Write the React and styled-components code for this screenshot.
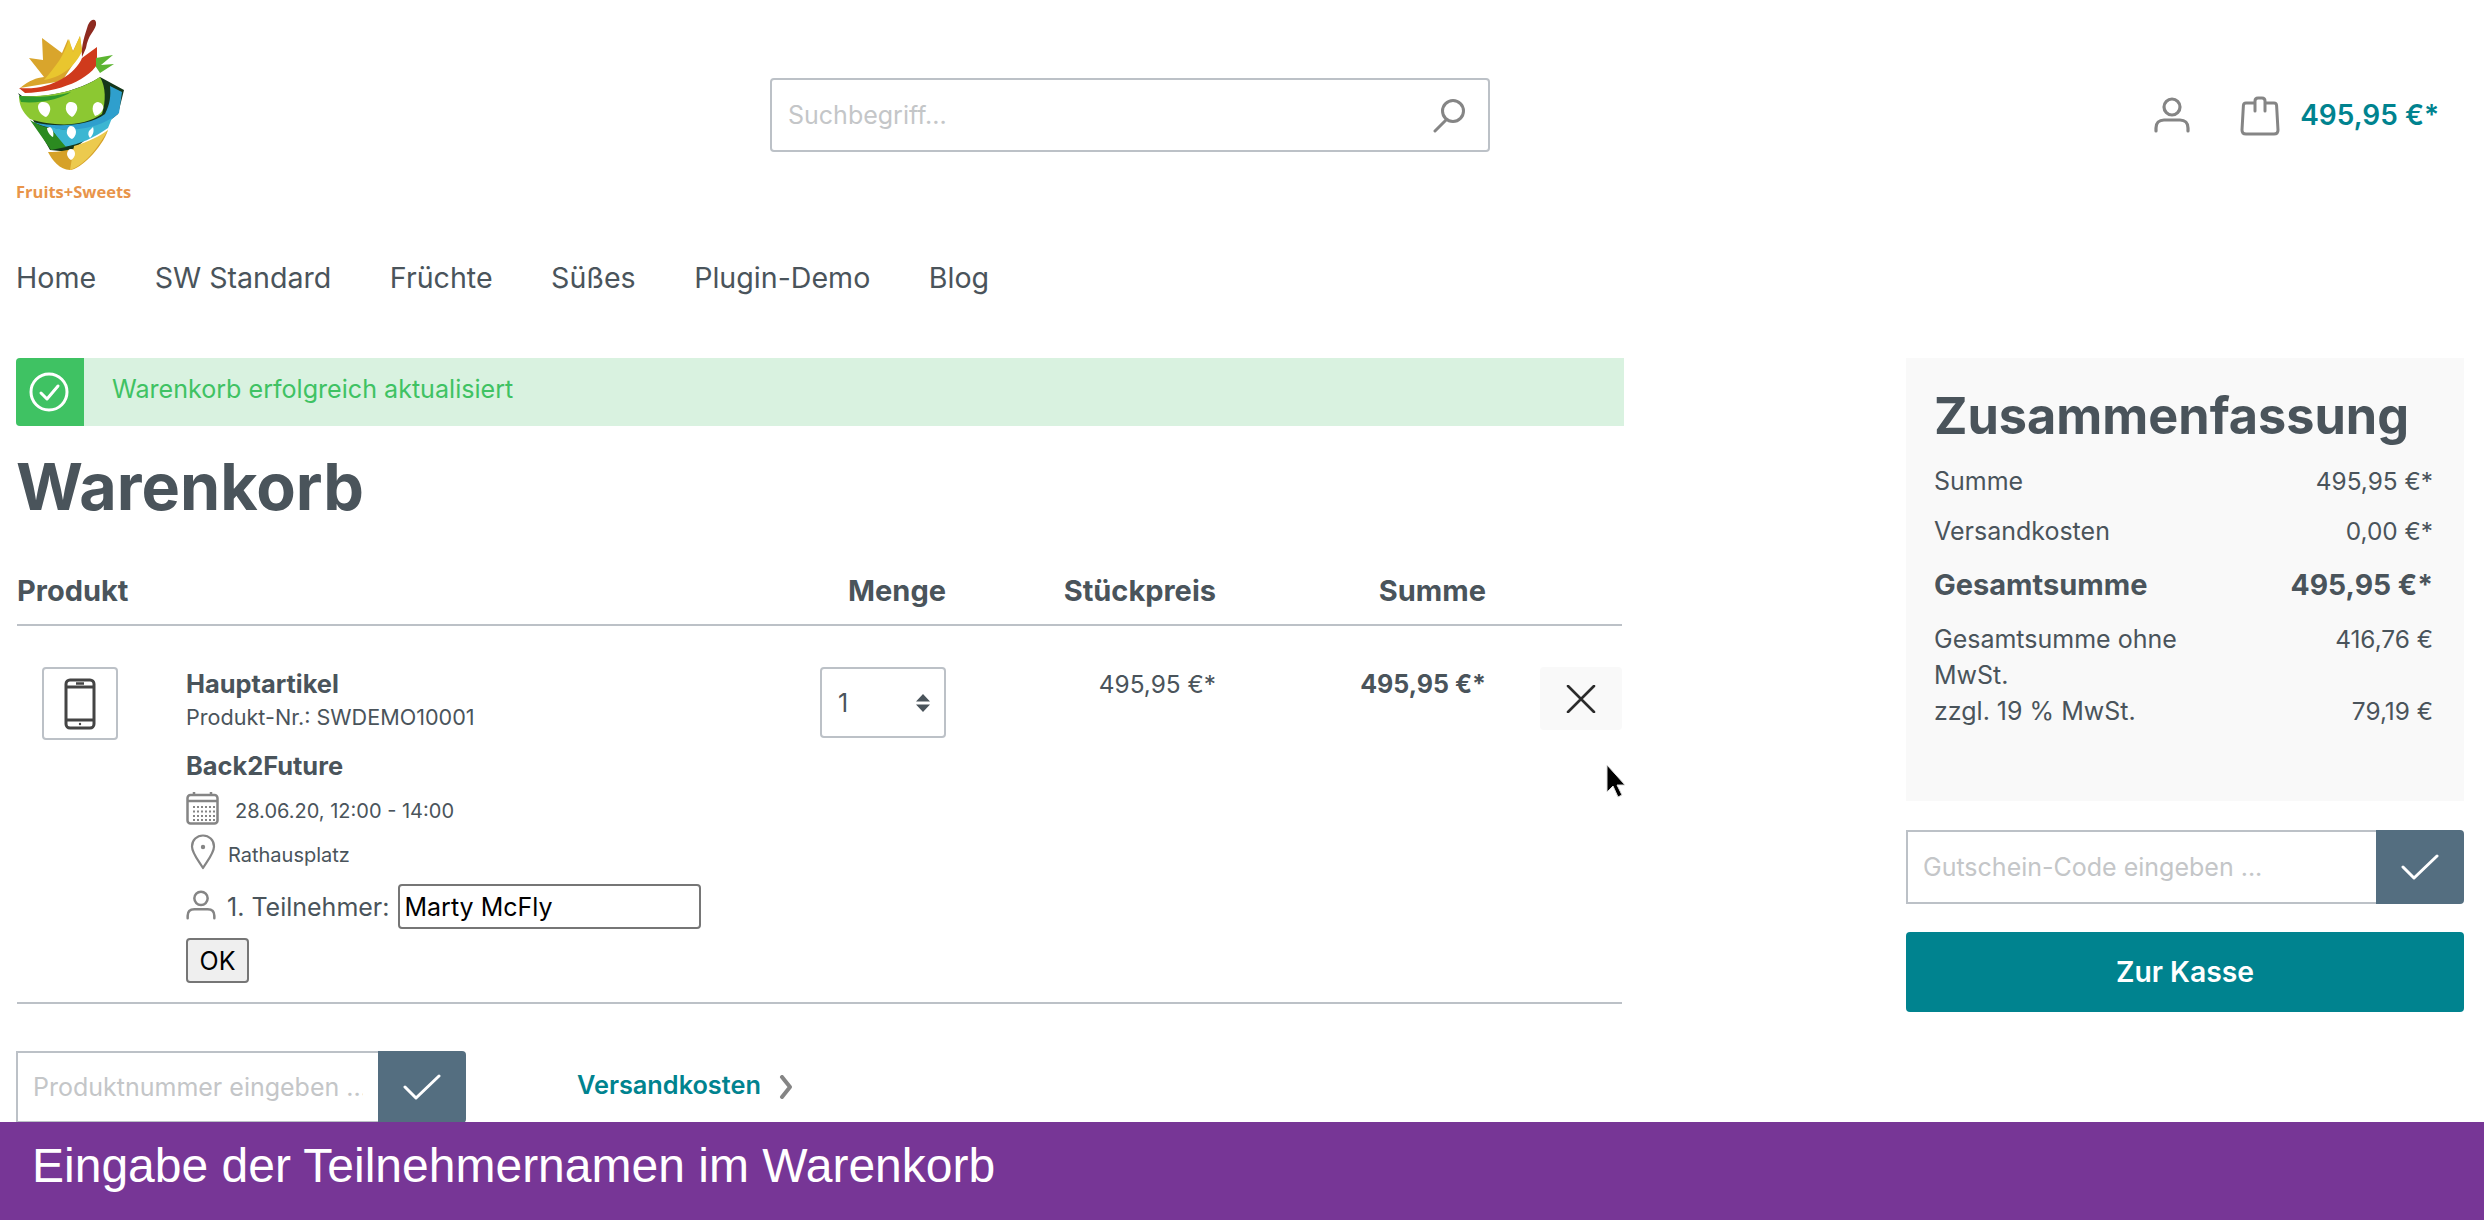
import React from "react";
import styled, { createGlobalStyle } from "styled-components";

const Global = createGlobalStyle`
  html, body { margin: 0; padding: 0; background: #fff; }
  body { font-family: Inter, "Liberation Sans", sans-serif; color: #4a545b; }
  * { box-sizing: border-box; }
  input::placeholder { color: #c4c6c8; opacity: 1; }
`;

const Page = styled.div`
  position: relative; width: 2484px; height: 1220px; overflow: hidden;
  display: flex; flex-direction: column;
`;
const Main = styled.main`
  flex: 1; min-height: 0; overflow: hidden; padding: 0 19px 0 16px;
`;
const Header = styled.header`
  height: 230px; display: flex; align-items: center;
`;
const Logo = styled.div`
  width: 754px; align-self: flex-start; padding-top: 17px; display: flex; flex-direction: column;
`;
const LogoText = styled.span`
  font: 700 16.5px/18px "Open Sans", sans-serif; color: #e8944a; margin-top: 1px;
`;
const Search = styled.div`
  width: 720px; height: 74px; border: 2px solid #bcc1c7; border-radius: 4px;
  display: flex; align-items: center; justify-content: space-between; padding: 0 20px 0 16px;
`;
const SearchInput = styled.input`
  border: 0; outline: 0; flex: 1; font: 400 25px Inter, sans-serif; background: transparent; padding: 0;
`;
const Actions = styled.div`
  flex: 1; display: flex; align-items: center; justify-content: flex-end; padding-right: 26px;
`;
const CartPrice = styled.span`
  font: 600 28px Inter, sans-serif; color: #00838f; margin-left: 20px;
`;
const BagSlot = styled.span`
  margin-left: 50px; display: flex; margin-top: 2px;
`;
const Nav = styled.nav`
  display: flex; gap: 58.5px; padding-top: 30px; margin-bottom: 62px;
`;
const NavItem = styled.a`
  font: 400 28.6px/36px Inter, sans-serif; color: #4a545b;
`;
const Columns = styled.div`
  display: grid; grid-template-columns: 1608px 558px; column-gap: 282px; align-items: start;
`;
const Alert = styled.div`
  height: 68px; background: #d9f2e0; border-radius: 4px 0 0 4px; display: flex; align-items: center;
  overflow: hidden; margin-bottom: 22px;
`;
const AlertIcon = styled.div`
  width: 68px; height: 100%; background: #3fc263; display: flex; align-items: center; justify-content: center;
  padding-right: 2px;
`;
const AlertText = styled.span`
  margin-left: 28px; font: 400 25.1px/30px Inter, sans-serif; color: #3fc263; margin-top: -6px;
`;
const Title = styled.h1`
  margin: 0; font: 700 64.6px/78px Inter, sans-serif; color: #4a545b; height: 132px;
`;
const CartGrid = styled.div`
  display: grid; grid-template-columns: 803px 126px 270px 270px 136px; width: 1605px; margin-left: 1px;
`;
const HeadRow = styled(CartGrid)`
  border-bottom: 2px solid #bcc1c7; font: 700 29px/30px Inter, sans-serif; height: 62px; margin-top: -16px; padding-top: 12px;
`;
const HeadCell = styled.div`
  text-align: ${p => (p.$right ? "right" : "left")};
`;
const ItemRow = styled(CartGrid)`
  border-bottom: 2px solid #bcc1c7; height: 378px; padding-top: 41px;
`;
const ProductCell = styled.div`
  display: flex; padding-left: 25px;
`;
const Thumb = styled.div`
  width: 76px; height: 73px; border: 2px solid #bcc1c7; border-radius: 4px; display: flex; align-items: center; justify-content: center;
  flex: none;
`;
const Info = styled.div`
  margin-left: 68px; display: flex; flex-direction: column; align-items: flex-start;
`;
const ItemName = styled.div`
  font: 700 25.4px/34px Inter, sans-serif;
`;
const ItemNo = styled.div`
  font: 400 21.6px/32px Inter, sans-serif; margin-bottom: 16px;
`;
const Meta = styled.div`
  display: flex; align-items: center; font: 400 20px/26px Inter, sans-serif;
  svg { margin-top: -6px; }
`;
const DateRow = styled(Meta)`
  gap: 16px; margin: 14px 0 15px;
`;
const PlaceRow = styled(Meta)`
  gap: 12px; padding-left: 4px; margin-bottom: 14px;
`;
const NameRow = styled.div`
  display: flex; align-items: center; font: 400 25px/30px Inter, sans-serif; margin-bottom: 9px;
  svg { margin-bottom: 3px; }
`;
const ParticipantLabel = styled.span`
  margin-left: 11px;
`;
const NameInput = styled.input`
  width: 303px; height: 45px; margin-left: 8px; border: 2px solid #767676; border-radius: 4px;
  font: 400 25px Inter, sans-serif; color: #000; padding: 0 5px; outline: 0;
`;
const OkButton = styled.button`
  width: 63px; height: 45px; border: 2px solid #767676; border-radius: 4px; background: #efefef;
  font: 400 25px Inter, sans-serif; color: #000; padding: 0;
`;
const Qty = styled.div`
  width: 126px; height: 71px; border: 2px solid #bcc1c7; border-radius: 4px;
  display: flex; align-items: center; justify-content: space-between; padding: 0 14px 0 16px; font: 400 25px Inter, sans-serif;
`;
const PriceCell = styled.div`
  text-align: right; font: ${p => (p.$bold ? "700 25px" : "400 24.4px")}/34px Inter, sans-serif;
`;
const RemoveCell = styled.div`
  display: flex; justify-content: flex-end;
`;
const RemoveButton = styled.button`
  width: 82px; height: 63px; background: #f9f9f9; border: 0; border-radius: 4px;
  display: flex; align-items: center; justify-content: center; padding: 0;
`;
const Bottom = styled.div`
  display: flex; align-items: center; margin-top: 47px;
`;
const InputGroup = styled.div`
  width: ${p => p.$w}px; height: ${p => p.$h}px; display: flex; flex: none;
`;
const GroupInput = styled.input`
  flex: 1; min-width: 0; border: 2px solid #bcc1c7; border-right: 0; font: 400 25px Inter, sans-serif;
  padding: 0 15px; outline: 0; background: #fff;
`;
const GroupButton = styled.button`
  width: 88px; flex: none; border: 0; background: #546e80; border-radius: 0 4px 4px 0;
  display: flex; align-items: center; justify-content: center; padding: 0;
`;
const ShipLink = styled.a`
  margin-left: 111px; font: 600 25.3px/30px Inter, sans-serif; color: #00838f; display: flex; align-items: center; gap: 18px; margin-top: -4px;
  svg { margin-top: 3px; }
`;
const Summary = styled.aside`
  background: #f9f9f9; height: 443px; padding: 28px 31px 26px 28px;
`;
const SummaryTitle = styled.h2`
  margin: 0 0 17px; font: 700 50.4px/60px Inter, sans-serif; color: #4a545b;
`;
const SumRow = styled.div`
  display: flex; justify-content: space-between; align-items: flex-start;
  font: 400 25px/36px Inter, sans-serif;
  margin-bottom: ${p => p.$mb ?? 0}px;
`;
const SumLabel = styled.span`
  width: 270px;
`;
const SumValue = styled.span`
  font-size: 24.4px;
`;
const TotalLabel = styled.span`
  font: 700 29px/36px Inter, sans-serif;
`;
const TotalValue = styled.span`
  font: 700 28.3px/36px Inter, sans-serif;
`;
const SideForm = styled.div`
  margin-top: 29px; display: flex; flex-direction: column; gap: 28px;
`;
const Checkout = styled.button`
  height: 80px; border: 0; border-radius: 4px; background: #00838f; color: #fff;
  font: 600 28.3px Inter, sans-serif;
`;
const Banner = styled.div`
  flex: none; height: 98px; background: #773696; color: #fff; display: flex; align-items: center; padding: 0 0 12px 32px;
  font: 400 48px "Liberation Sans", Arial, sans-serif;
`;
const Cursor = styled.svg`
  position: absolute; left: 1605px; top: 763px;
`;

const Check = () => (
  <svg width="38" height="26" viewBox="0 0 38 26" fill="none" stroke="#fff" strokeWidth="3" strokeLinecap="round" strokeLinejoin="round">
    <path d="M2 13l11 11L36 2" />
  </svg>
);

const LogoMark = () => (
  <svg width="125" height="165" viewBox="16 17 125 165">
    <path d="M20 88c10-8 16-10 24-11L29 58l14 2-1-22 20 15 6-14 5 12 7-15 2 15-20 30z" fill="#d9a52c" />
    <path d="M44 80c12-14 20-24 25-41l4 13 7-16 2 15C76 66 60 78 44 80z" fill="#e9c62e" />
    <path d="M19 88c30 3 56-13 63-30l15-11 0 11 3 2C90 80 60 92 25 93z" fill="#cf3a1c" />
    <path d="M82 57c-1-12 3-22 6-32 3-7 9-7 8 0-2 7-8 10-10 23z" fill="#8e2a20" />
    <path d="M96 58l17-3-12 10 13-1-14 9-4-6z" fill="#5cb531" />
    <path d="M18 93l4 3c30 2 60-7 78-19l24 13-6 24-48 38-20-2-17-30z" fill="#14361a" />
    <path d="M19 96c35 2 65-8 81-19 6 10 6 24 2 37-20 14-50 12-72 5-8-7-11-15-11-23z" fill="#8cc832" />
    <path d="M19 96c20 2 40 0 52-4-8 6-30 12-50 10z" fill="#2f9a2c" />
    <path d="M110 86l12 6-3 21c-14 14-30 18-52 17-12-1-24-3-34-8 24 6 56 4 72-8 5-10 6-18 5-28z" fill="#2f9fcd" />
    <path d="M50 127c18 5 42 3 62-9l-4 10c-14 10-28 16-44 19z" fill="#3cb6d2" />
    <path d="M30 120c6 4 14 7 20 8l16 19-15 3z" fill="#2b8a20" />
    <path d="M48 152c22 0 47-8 60-22-6 18-28 40-38 40-10 0-18-10-22-18z" fill="#d6a128" />
    <path d="M70 170c14-4 28-22 38-40-8 6-20 12-34 16z" fill="#ecca4e" />
    <g fill="#fff">
      <path d="M43 102c6 0 8 5 7 9-1 3-2 5-4 6-4-1-8-6-8-10 0-3 2-5 5-5z" />
      <path d="M71 102c5 0 7 4 6 8-1 3-3 6-5 7-4-2-7-7-6-10 0-3 2-5 5-5z" />
      <path d="M98 102c4 1 6 4 5 7-1 3-4 6-8 7-2-3-3-7-2-10 1-3 3-4 5-4z" />
      <path d="M50 127c3 2 4 6 3 10-3-1-6-6-6-9z" />
      <path d="M71 126c3 0 5 3 5 6 0 3-2 6-4 7-3-1-6-5-5-8 0-3 2-5 4-5z" />
      <path d="M93 127c1 3 1 7-3 11-2-2-2-5-1-7z" />
      <path d="M71 149c3 0 4 3 4 5 0 2-2 5-4 6-2-1-4-4-4-6 0-3 2-5 4-5z" />
    </g>
  </svg>
);

const SearchIcon = () => (
  <svg width="36" height="36" viewBox="0 0 36 36" fill="none" stroke="#858585" strokeWidth="3" strokeLinecap="round">
    <circle cx="21" cy="14" r="10.5" />
    <path d="M14 23L3 34" />
  </svg>
);
const UserIcon = ({ size = 36, sw = 3.2, color = "#858585" }) => (
  <svg width={size} height={size} viewBox="0 0 36 36" fill="none" stroke={color} strokeWidth={sw} strokeLinecap="round">
    <circle cx="18" cy="10" r="8" />
    <path d="M2 34v-3c0-5 3-8 8-8h16c5 0 8 3 8 8v3" />
  </svg>
);
const BagIcon = () => (
  <svg width="40" height="40" viewBox="0 0 40 40" fill="none" stroke="#858585" strokeWidth="3" strokeLinecap="round" strokeLinejoin="round">
    <path d="M14 7H6c-1.500 0-2.500 1-2.600 2.500L2 34c0 2.500 1.500 4 4 4h28c2.500 0 4-1.500 4-4L36.600 9.500C36.500 8 35.500 7 34 7h-8" />
    <path d="M15 15V5c0-2 1-3 3-3h4c2 0 3 1 3 3v10" />
  </svg>
);
const AlertCheck = () => (
  <svg width="40" height="40" viewBox="0 0 40 40" fill="none" stroke="#fff" strokeWidth="3" strokeLinecap="round" strokeLinejoin="round">
    <circle cx="20" cy="20" r="18" />
    <path d="M12 21l6 6 11-13" />
  </svg>
);
const Phone = () => (
  <svg width="32" height="52" viewBox="0 0 32 52" fill="none" stroke="#444" strokeWidth="3">
    <rect x="2" y="2" width="28" height="48" rx="4" />
    <path d="M2 9h28M2 42h28" />
    <path d="M12 5.500h8" strokeWidth="2.500" />
    <circle cx="16" cy="46" r="1.200" fill="#444" stroke="none" />
  </svg>
);
const Calendar = () => (
  <svg width="33" height="34" viewBox="0 0 33 34" fill="none" stroke="#858585" strokeWidth="2.500">
    <rect x="1.500" y="4" width="30" height="28.500" rx="3" />
    <path d="M1.500 10h30M8 1v4M25 1v4" />
    <g fill="#858585" stroke="none">
      {[15, 19.5, 24, 28].flatMap(y => [7, 11, 15, 19, 23, 27].map(x => <rect key={x + "-" + y} x={x} y={y} width="2" height="2" />))}
    </g>
  </svg>
);
const Pin = () => (
  <svg width="26" height="36" viewBox="0 0 26 36" fill="none" stroke="#858585" strokeWidth="2.200" strokeLinejoin="round">
    <path d="M13 34C8 26 2 19 2 12.500 2 6 7 1.500 13 1.500S24 6 24 12.500C24 19 18 26 13 34z" />
    <circle cx="13" cy="13" r="2.200" fill="#858585" stroke="none" />
  </svg>
);
const Arrows = () => (
  <svg width="14" height="18" viewBox="0 0 14 18" fill="#4a545b">
    <path d="M7 0l7 7.500H0zM7 18L0 10.500h14z" />
  </svg>
);
const Cross = () => (
  <svg width="30" height="28" viewBox="0 0 30 28" fill="none" stroke="#2b2b2b" strokeWidth="2.600" strokeLinecap="round">
    <path d="M2 1l26 26M28 1L2 27" />
  </svg>
);
const Chevron = () => (
  <svg width="14" height="24" viewBox="0 0 14 24" fill="none" stroke="#858585" strokeWidth="4" strokeLinecap="round" strokeLinejoin="round">
    <path d="M3 2l8 10-8 10" />
  </svg>
);

export default function App() {
  return (
    <Page>
      <Global />
      <Main>
        <Header>
          <Logo>
            <LogoMark />
            <LogoText>Fruits+Sweets</LogoText>
          </Logo>
          <Search>
            <SearchInput placeholder="Suchbegriff..." readOnly />
            <SearchIcon />
          </Search>
          <Actions>
            <UserIcon />
            <BagSlot><BagIcon /></BagSlot>
            <CartPrice>495,95 €*</CartPrice>
          </Actions>
        </Header>
        <Nav>
          {["Home", "SW Standard", "Früchte", "Süßes", "Plugin-Demo", "Blog"].map(n => <NavItem key={n}>{n}</NavItem>)}
        </Nav>
        <Columns>
          <section>
            <Alert>
              <AlertIcon><AlertCheck /></AlertIcon>
              <AlertText>Warenkorb erfolgreich aktualisiert</AlertText>
            </Alert>
            <Title>Warenkorb</Title>
            <HeadRow>
              <HeadCell>Produkt</HeadCell>
              <HeadCell $right>Menge</HeadCell>
              <HeadCell $right>Stückpreis</HeadCell>
              <HeadCell $right>Summe</HeadCell>
              <HeadCell />
            </HeadRow>
            <ItemRow>
              <ProductCell>
                <Thumb><Phone /></Thumb>
                <Info>
                  <ItemName>Hauptartikel</ItemName>
                  <ItemNo>Produkt-Nr.: SWDEMO10001</ItemNo>
                  <ItemName>Back2Future</ItemName>
                  <DateRow><Calendar />28.06.20, 12:00 - 14:00</DateRow>
                  <PlaceRow><Pin />Rathausplatz</PlaceRow>
                  <NameRow>
                    <UserIcon size={30} sw={3} />
                    <ParticipantLabel>1. Teilnehmer:</ParticipantLabel>
                    <NameInput defaultValue="Marty McFly" />
                  </NameRow>
                  <OkButton>OK</OkButton>
                </Info>
              </ProductCell>
              <div><Qty>1<Arrows /></Qty></div>
              <PriceCell>495,95 €*</PriceCell>
              <PriceCell $bold>495,95 €*</PriceCell>
              <RemoveCell><RemoveButton><Cross /></RemoveButton></RemoveCell>
            </ItemRow>
            <Bottom>
              <InputGroup $w={450} $h={72}>
                <GroupInput placeholder="Produktnummer eingeben ..." readOnly />
                <GroupButton><Check /></GroupButton>
              </InputGroup>
              <ShipLink>Versandkosten <Chevron /></ShipLink>
            </Bottom>
          </section>
          <div>
            <Summary>
              <SummaryTitle>Zusammenfassung</SummaryTitle>
              <SumRow $mb={14}><span>Summe</span><SumValue>495,95 €*</SumValue></SumRow>
              <SumRow $mb={18}><span>Versandkosten</span><SumValue>0,00 €*</SumValue></SumRow>
              <SumRow $mb={18}><TotalLabel>Gesamtsumme</TotalLabel><TotalValue>495,95 €*</TotalValue></SumRow>
              <SumRow><SumLabel>Gesamtsumme ohne MwSt.</SumLabel><SumValue>416,76 €</SumValue></SumRow>
              <SumRow><span>zzgl. 19 % MwSt.</span><SumValue>79,19 €</SumValue></SumRow>
            </Summary>
            <SideForm>
              <InputGroup $w={558} $h={74}>
                <GroupInput placeholder="Gutschein-Code eingeben ..." readOnly />
                <GroupButton><Check /></GroupButton>
              </InputGroup>
              <Checkout>Zur Kasse</Checkout>
            </SideForm>
          </div>
        </Columns>
      </Main>
      <Banner>Eingabe der Teilnehmernamen im Warenkorb</Banner>
      <Cursor width="22" height="36" viewBox="0 0 22 36">
        <path d="M2 2v27l6-6 5 11 4-2-5-10h8z" fill="#000" stroke="#ddd" strokeWidth="1" />
      </Cursor>
    </Page>
  );
}
